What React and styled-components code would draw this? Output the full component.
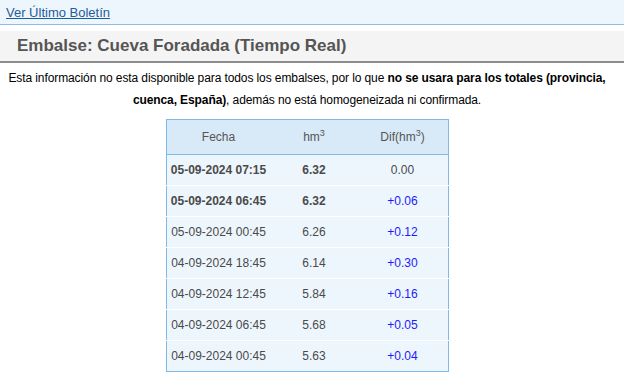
import React from 'react';
import styled, { createGlobalStyle } from 'styled-components';

const GlobalStyle = createGlobalStyle`
  body {
    margin: 0;
    background: #ffffff;
    font-family: "Liberation Sans", Arial, sans-serif;
  }
`;

const TopBar = styled.div`
  height: 24px;
  background-color: #eef6fd;
  border-bottom: 1px solid #8dbde3;
  padding-left: 6px;
  display: flex;
  align-items: center;
`;

const BulletinLink = styled.a`
  font-size: 13px;
  color: #1f5c99;
  text-decoration: underline;
`;

const TitleBar = styled.h2`
  margin: 6px 0 0;
  height: 30px;
  background-color: #f4f4f4;
  border-bottom: 2px solid #8c8c8c;
  padding-left: 17px;
  display: flex;
  align-items: center;
  font-size: 17px;
  font-weight: bold;
  color: #555555;
`;

const Content = styled.div`
  padding-right: 10px;
`;

const Notice = styled.p`
  margin: 4px 0 8px;
  font-size: 12px;
  letter-spacing: -0.1px;
  line-height: 22px;
  color: #000000;
  text-align: center;

  strong {
    font-weight: bold;
  }
`;

const DataTable = styled.table`
  margin: 0 auto;
  border-collapse: collapse;
  border: 1px solid #7dbbe6;
  font-size: 12px;
  color: #4a4a4a;
`;

const HeadCell = styled.th`
  height: 34px;
  padding: 0;
  width: ${({ $w }) => $w}px;
  background-color: #d8e9f8;
  border-bottom: 1px solid #7dbbe6;
  font-weight: normal;
  font-size: 12px;
  color: #555555;
  text-align: center;

  sup {
    font-size: 9px;
    line-height: 0;
  }
`;

const Row = styled.tr`
  background-color: #eef6fd;
  border-top: ${({ $first }) => ($first ? 'none' : '1px solid #ffffff')};
`;

const Cell = styled.td`
  height: 30px;
  padding: 0;
  text-align: center;
  font-weight: ${({ $bold }) => ($bold ? 'bold' : 'normal')};
  color: ${({ $tone }) => ($tone === 'up' ? '#1a1aff' : '#4a4a4a')};
`;

const readings = [
  { date: '05-09-2024 07:15', value: '6.32', diff: '0.00', bold: true },
  { date: '05-09-2024 06:45', value: '6.32', diff: '+0.06', bold: true },
  { date: '05-09-2024 00:45', value: '6.26', diff: '+0.12' },
  { date: '04-09-2024 18:45', value: '6.14', diff: '+0.30' },
  { date: '04-09-2024 12:45', value: '5.84', diff: '+0.16' },
  { date: '04-09-2024 06:45', value: '5.68', diff: '+0.05' },
  { date: '04-09-2024 00:45', value: '5.63', diff: '+0.04' },
];

const App = () => {
  return (
    <>
      <GlobalStyle />
      <TopBar>
        <BulletinLink href="#">Ver Último Boletín</BulletinLink>
      </TopBar>
      <TitleBar>Embalse: Cueva Foradada (Tiempo Real)</TitleBar>
      <Content>
        <Notice>
          Esta información no esta disponible para todos los embalses, por lo que{' '}
          <strong>no se usara para los totales (provincia, cuenca, España)</strong>, además no
          está homogeneizada ni confirmada.
        </Notice>
        <DataTable>
          <thead>
            <tr>
              <HeadCell $w={104}>Fecha</HeadCell>
              <HeadCell $w={87}>
                hm<sup>3</sup>
              </HeadCell>
              <HeadCell $w={90}>
                Dif(hm<sup>3</sup>)
              </HeadCell>
            </tr>
          </thead>
          <tbody>
            {readings.map((r, i) => (
              <Row key={r.date} $first={i === 0}>
                <Cell $bold={r.bold}>{r.date}</Cell>
                <Cell $bold={r.bold}>{r.value}</Cell>
                <Cell $tone={r.diff.startsWith('+') ? 'up' : 'flat'}>{r.diff}</Cell>
              </Row>
            ))}
          </tbody>
        </DataTable>
      </Content>
    </>
  );
};

export default App;
